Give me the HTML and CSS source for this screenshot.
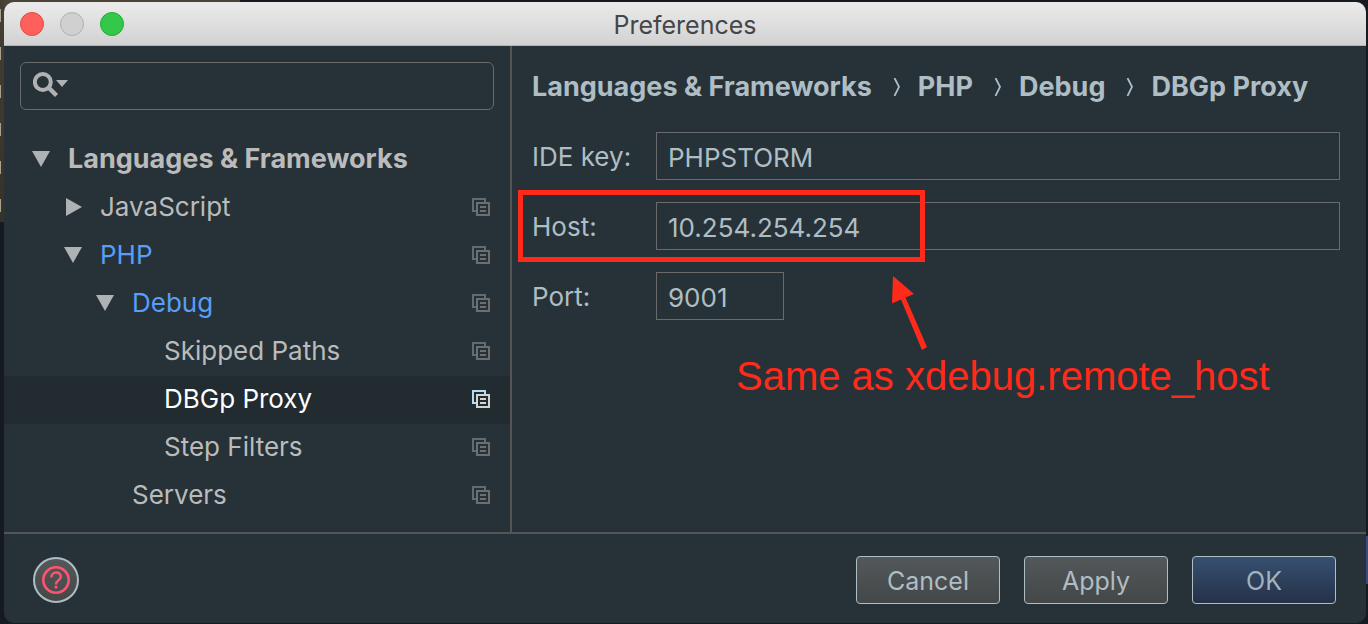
FILE: index.html
```html
<!DOCTYPE html>
<html lang="en">
<head>
<meta charset="utf-8">
<meta name="viewport" content="width=device-width, initial-scale=1">
<title>Preferences</title>
<link rel="stylesheet" href="styles.css">
</head>
<body>
<svg class="sprite" aria-hidden="true">
  <symbol id="copy" viewBox="0 0 18 18">
    <path class="copy-back" d="M0 0H14V4H12V2H2V12H4V14H0Z"/>
    <path class="copy-front" fill-rule="evenodd" d="M4 4H18V18H4ZM6 6V16H16V6ZM8 8H14V10H8ZM8 12H14V14H8Z"/>
  </symbol>
  <symbol id="down" viewBox="0 0 18 16"><path d="M0 0H18L9 16Z"/></symbol>
  <symbol id="right" viewBox="0 0 16 18"><path d="M0 0L16 9L0 18Z"/></symbol>
  <symbol id="sep" viewBox="0 0 8 18"><path d="M1.500 0L6 8.800L1.500 18" fill="none" stroke="#afbdc4" stroke-width="1.800"/></symbol>
</svg>
<div class="window">
  <header class="titlebar">
    <div class="lights">
      <button class="light close" aria-label="Close"></button>
      <button class="light minimize" aria-label="Minimize" disabled></button>
      <button class="light zoom" aria-label="Zoom"></button>
    </div>
    <h1 class="title">Preferences</h1>
  </header>
  <div class="main">
    <nav class="sidebar" aria-label="Settings">
      <div class="search">
        <svg class="search-icon" viewBox="0 0 36 26" width="36" height="26" aria-hidden="true">
          <circle cx="9.800" cy="10" r="8" fill="none" stroke="#afb1b3" stroke-width="4"/>
          <path d="M15.500 15.500L23.500 23.500" stroke="#afb1b3" stroke-width="4.500"/>
          <path d="M23 8H35L29 15Z" fill="#afb1b3"/>
        </svg>
        <input class="search-input" type="text" aria-label="Search settings">
      </div>
      <ul class="tree">
        <li class="row level-0"><svg class="arrow down"><use href="#down"/></svg><span class="name">Languages &amp; Frameworks</span></li>
        <li class="row level-1"><svg class="arrow right"><use href="#right"/></svg><span class="name">JavaScript</span><svg class="copy"><use href="#copy"/></svg></li>
        <li class="row level-1 modified"><svg class="arrow down"><use href="#down"/></svg><span class="name">PHP</span><svg class="copy"><use href="#copy"/></svg></li>
        <li class="row level-2 modified"><svg class="arrow down"><use href="#down"/></svg><span class="name">Debug</span><svg class="copy"><use href="#copy"/></svg></li>
        <li class="row level-4"><span class="name">Skipped Paths</span><svg class="copy"><use href="#copy"/></svg></li>
        <li class="row level-4 selected"><span class="name">DBGp Proxy</span><svg class="copy"><use href="#copy"/></svg></li>
        <li class="row level-4"><span class="name">Step Filters</span><svg class="copy"><use href="#copy"/></svg></li>
        <li class="row level-3"><span class="name">Servers</span><svg class="copy"><use href="#copy"/></svg></li>
      </ul>
    </nav>
    <main class="panel">
      <div class="crumbs">
        <span>Languages &amp; Frameworks</span><svg class="sep"><use href="#sep"/></svg>
        <span>PHP</span><svg class="sep"><use href="#sep"/></svg>
        <span>Debug</span><svg class="sep"><use href="#sep"/></svg>
        <span>DBGp Proxy</span>
      </div>
      <form class="form" id="proxy">
        <div class="field"><label for="key">IDE key:</label><input id="key" type="text" value="PHPSTORM"></div>
        <div class="field"><label for="host">Host:</label><input id="host" type="text" value="10.254.254.254"><span class="highlight"></span></div>
        <div class="field"><label for="port">Port:</label><input class="short" id="port" type="text" value="9001"></div>
      </form>
      <svg class="pointer" viewBox="0 0 38 76" aria-hidden="true">
        <path d="M4 0L25 18L16.500 21.500L38 71L33 74L12 23.500L3 27.500Z" fill="#ff2a1a"/>
      </svg>
      <p class="note">Same as xdebug.remote_host</p>
    </main>
  </div>
  <footer class="footer">
    <button class="help" aria-label="Help">
      <svg viewBox="2 2 42 42" width="42" height="42" aria-hidden="true">
        <circle cx="23" cy="23" r="12.700" fill="none" stroke="#ff5370" stroke-width="2.600"/>
        <path d="M18.300 20.500C18.300 14 27.800 14 27.800 19.800C27.800 23.500 23 23.200 23 27.500" fill="none" stroke="#ff5370" stroke-width="2.400"/>
        <path d="M21.600 28.800H24.400V31.400H21.600Z" fill="#ff5370"/>
      </svg>
    </button>
    <div class="actions">
      <button class="btn">Cancel</button>
      <button class="btn">Apply</button>
      <button class="btn primary">OK</button>
    </div>
  </footer>
</div>
</body>
</html>
```
FILE: styles.css
```css
* { box-sizing: border-box; }

body {
  margin: 0;
  min-height: 100vh;
  display: flex;
  padding: 2px 2px 1px 4px;
  font: 26px/32px Inter, "Liberation Sans", sans-serif;
  color: #bbb;
  background:
    repeating-linear-gradient(transparent 0 9px, #a9a18c 9px 22px, transparent 22px 38px) 0 0 / 1px 222px no-repeat,
    linear-gradient(#453f35, #35322b) 0 0 / 4px 222px no-repeat,
    linear-gradient(#4a4439, #4a4439) 0 0 / 240px 20px no-repeat,
    linear-gradient(#3c4a7c, #3c4a7c) 100% 536px / 2px 48px no-repeat,
    #151b20;
}

input, button { font: inherit; color: inherit; margin: 0; }
.sprite { position: absolute; width: 0; height: 0; }

.window {
  flex: 1;
  display: flex;
  flex-direction: column;
  border-radius: 10px;
  overflow: hidden;
  background: #263238;
}

.titlebar {
  display: grid;
  grid-template-columns: 1fr auto 1fr;
  align-items: center;
  height: 44px;
  padding: 0 16px;
  background: linear-gradient(#ebebeb, #d2d2d2);
  border-bottom: 1px solid #b4b4b4;
}
.lights { display: flex; gap: 16px; }
.light { width: 24px; height: 24px; padding: 0; border-radius: 50%; border: 1px solid; }
.close { background: #ff605c; border-color: #e2483f; }
.minimize { background: #d0d0d0; border-color: #b0b0b0; }
.zoom { background: #34c84a; border-color: #1fab32; }
.title { margin: 0; padding-top: 2px; font-size: 25px; font-weight: 400; color: #464646; }

.main { flex: 1; display: flex; }
.sidebar { width: 508px; padding-top: 16px; border-right: 2px solid #555; }
.search {
  display: flex;
  align-items: center;
  height: 48px;
  margin: 0 16px 26px;
  padding: 0 12px;
  border: 1px solid #6a6a6a;
  border-radius: 6px;
}
.search-icon { margin-bottom: 2px; }
.search-input { flex: 1; min-width: 0; border: 0; background: none; outline: 0; }

.tree { margin: 0; padding: 0; list-style: none; }
.row { display: flex; align-items: center; height: 48px; padding: 0 20px 2px 0; }
.name { flex: 1; }
.arrow { fill: #afb1b3; margin-right: 18px; }
.arrow.down { width: 18px; height: 16px; }
.arrow.right { width: 16px; height: 18px; margin-left: 2px; }
.level-0 { padding-left: 28px; font-size: 27px; font-weight: 700; }
.level-1 { padding-left: 60px; }
.level-2 { padding-left: 92px; }
.level-3 { padding-left: 128px; }
.level-4 { padding-left: 160px; }
.modified .name { color: #589df6; }
.selected { background: #212b30; color: #fff; }
.copy { width: 18px; height: 18px; --back: #5d6c75; --front: #6e6e6e; }
.selected .copy { --back: #b3dcf2; --front: #d4d4d4; }
.copy-back { fill: var(--back); }
.copy-front { fill: var(--front); }

.panel { position: relative; flex: 1; padding: 25px 26px 0 20px; color: #afbdc4; }
.crumbs { display: flex; align-items: center; margin-bottom: 29px; font-size: 27px; font-weight: 700; white-space: nowrap; }
.sep { width: 8px; height: 18px; margin: 0 17px 0 21px; }
.form { display: grid; gap: 22px; }
.field { position: relative; display: grid; grid-template-columns: 124px 1fr; align-items: center; }
.field label { padding-top: 2px; }
.field input {
  width: 100%;
  height: 48px;
  padding: 2px 11px 0;
  border: 1px solid #6a6a6a;
  background: none;
  outline: 0;
}
.field .short { width: 128px; }
.highlight {
  position: absolute;
  top: -12px;
  left: -14px;
  width: 407px;
  height: 72px;
  border: 5px solid #ff2a1a;
}
.pointer { position: absolute; left: 377px; top: 230px; width: 38px; height: 76px; }
.note {
  position: absolute;
  left: 224px;
  top: 306px;
  margin: 0;
  font-family: "Liberation Sans", Arial, sans-serif;
  font-size: 40px;
  line-height: 48px;
  white-space: nowrap;
  color: #ff2a1a;
}

.footer {
  display: flex;
  align-items: center;
  justify-content: space-between;
  height: 91px;
  padding: 2px 30px 0 29px;
  border-top: 2px solid #555;
}
.help {
  width: 46px;
  height: 46px;
  padding: 0;
  display: grid;
  place-items: center;
  border: 2px solid #afbdc4;
  border-radius: 50%;
  background: linear-gradient(#53585a, #444849);
}
.actions { display: flex; gap: 24px; }
.btn {
  width: 144px;
  height: 48px;
  padding: 2px 0 0;
  border: 1px solid #afbdc4;
  border-radius: 4px;
  font-size: 25px;
  color: #afbdc4;
  background: linear-gradient(#53585a, #434748);
}
.primary { background: linear-gradient(#365070, #263148); color: #9fb2be; }
```
